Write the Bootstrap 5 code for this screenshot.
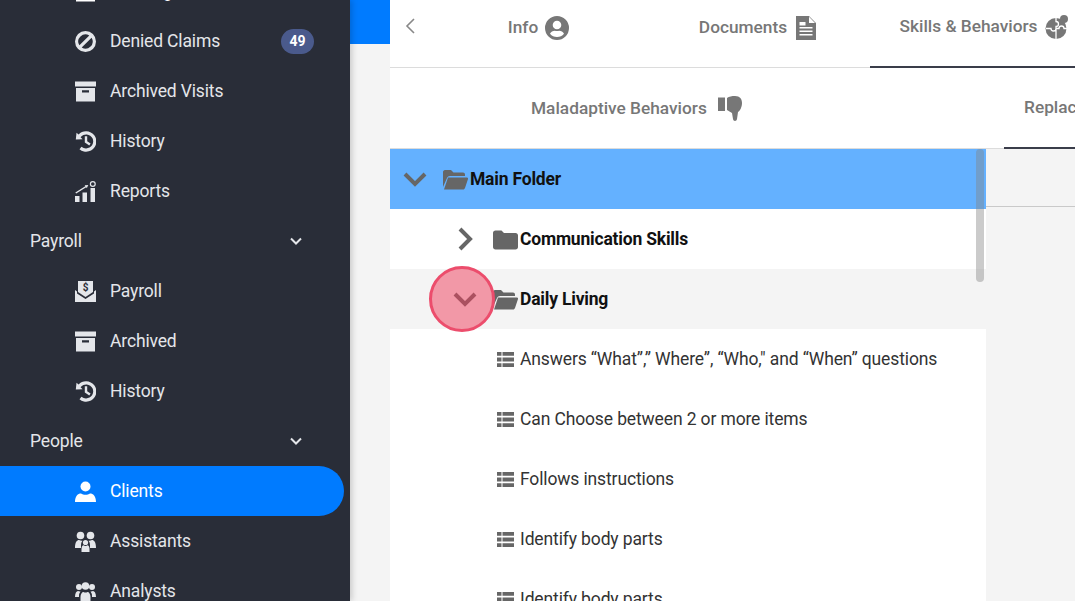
<!DOCTYPE html>
<html lang="en">
<head>
    <meta charset="UTF-8">
    <title>Clients</title>
    <meta name="viewport" content="width=device-width, initial-scale=1">
    <link href="https://cdn.jsdelivr.net/npm/bootstrap@5.3.2/dist/css/bootstrap.min.css" rel="stylesheet">
    <style>
        html, body { height: 100%; overflow: hidden; }
        body { background: #f4f4f4; font-family: Roboto, "Liberation Sans", sans-serif; font-size: 18px; }
        .app-shell { height: 601px; overflow: hidden; }

        .side-menu { width: 350px; background: #292d38; box-shadow: 2px 0 6px rgba(0,0,0,.18); z-index: 2; }
        .side-list { margin-top: -34px; }
        .side-link { height: 50px; color: #e4e6ea; font-size: 17.5px; letter-spacing: -.15px; padding: 0 36px 0 75px; }
        .side-link:hover { color: #fff; }
        .side-link svg { width: 21px; height: 21px; margin-right: 14px; fill: currentColor; flex: none; }
        .side-head { padding: 0 47px 0 30px; }
        .side-head svg { width: 14px; height: 14px; margin-right: 0; }
        .side-active { background: #007bff; color: #fff; width: 344px; border-radius: 0 25px 25px 0; }
        .side-badge { background: #4a5a8c; font-size: 14px; font-weight: 700; width: 33px; height: 25px; padding: 0; line-height: 25px; margin-right: 0; }

        .gutter { width: 40px; }
        .gutter-top { height: 44px; background: #007bff; }

        .work-panel { width: 685px; background: #fff; }
        .tab-row { height: 68px; border-bottom: 1px solid #dcdcdc; }
        .back-btn { width: 40px; flex: none; color: #888; }
        .back-btn svg { width: 12px; height: 18px; }
        .top-tab { width: 220px; flex: none; height: 68px; color: #777; font-weight: 500; font-size: 17.3px; padding: 0 3px 13px 0; }
        .top-tab svg { fill: #777; width: 24px; height: 24px; margin-left: 7px; }
        .top-tab-on { width: 228px; padding-right: 0; border-bottom: 2px solid #3a3d4a; }
        .sub-row { height: 81px; border-bottom: 1px solid #dcdcdc; }
        .sub-tab { height: 81px; color: #777; font-weight: 500; font-size: 17.3px; }
        .sub-tab svg { fill: #777; width: 24px; height: 25px; margin-left: 11px; }
        .sub-first { width: 614px; flex: none; padding-left: 141px; }
        .sub-on { flex: 1 0 auto; border-bottom: 2px solid #3a3d4a; padding-left: 20px; white-space: nowrap; }

        .tree-area { height: 452px; }
        .tree-pane { width: 596px; background: #fff; flex: none; }
        .tree-row { height: 60px; color: #111; }
        .tree-row svg { fill: #666; flex: none; }
        .tree-main { background: #64b1ff; padding-left: 12px; }
        .tree-sub { padding-left: 62px; }
        .tree-hot { background: #f4f4f4; }
        .tree-leaf { padding-left: 107px; color: #333; font-size: 17.5px; letter-spacing: -.13px; }
        .tree-leaf svg { width: 17px; height: 15px; margin-right: 6px; }
        .tree-name { font-weight: 700; font-size: 17.5px; letter-spacing: -.2px; }
        .chev { width: 26px; height: 26px; margin-right: 15px; }
        .folder { width: 25px; height: 21px; margin-right: 2px; }
        .tree-bar { position: absolute; left: 586px; top: 0; width: 8px; height: 133px; border-radius: 4px; background: rgba(130,130,130,.42); }
        .side-pane { background: #f4f4f4; }
        .side-pane-top { height: 58px; border-bottom: 1px solid #c9c9c9; }

        .click-mark { position: absolute; left: 429px; top: 266px; width: 66px; height: 66px; border-radius: 50%; background: rgba(240,60,90,.5); border: 3px solid #ec4d6c; z-index: 3; }
    </style>
</head>
<body>
    <svg width="0" height="0" class="d-block position-absolute">
        <defs>
            <symbol id="i-ban" viewBox="0 0 21 21"><path fill-rule="evenodd" d="M10.500 0a10.500 10.500 0 1 0 0 21 10.500 10.500 0 0 0 0-21zM4.400 14.300A7.200 7.200 0 0 1 14.300 4.400zM6.700 16.600 16.600 6.700a7.200 7.200 0 0 1-9.900 9.900z"/></symbol>
            <symbol id="i-box" viewBox="0 0 21 21"><path fill-rule="evenodd" d="M0 .5h21v5H0zM1 7h19v13.500H1zM7 9.300v2.200h7V9.300z"/></symbol>
            <symbol id="i-hist" viewBox="0 0 21 21"><path d="M11 .3A10 10 0 0 0 3.600 3.600L1.500 1.800.8 8.600l6.800-.4-2-2A7 7 0 1 1 11 17.400a7 7 0 0 1-4.500-1.600l-2 2.400A10.200 10.200 0 1 0 11 .3z"/><path d="M9.800 5.200h2.400v5l3.400 2.300-1.300 1.900-4.500-3z"/></symbol>
            <symbol id="i-rep" viewBox="0 0 21 21"><path d="M0 15h4.500v6H0zM7.500 11.500H12V21H7.500zM15.500 7H20v14h-4.500z"/><path d="M.3 11.600l10-6.300-.6-1 3.600-.4-1.500 3.300-.6-1-10 6.200z"/><path fill-rule="evenodd" d="M17.800 0a3 3 0 1 0 0 6 3 3 0 0 0 0-6zm0 1.200a1.800 1.800 0 1 1 0 3.600 1.800 1.800 0 0 1 0-3.600z"/></symbol>
            <symbol id="i-pay" viewBox="0 0 21 21"><path d="M3 0h15v11l-7.500 5L3 11z"/><path d="M0 9l2 1.400v2L10.500 18l8.500-5.600v-2L21 9v12H0z"/><text x="10.500" y="10" text-anchor="middle" font-size="10" font-weight="700" font-family="Roboto, sans-serif" fill="#292d38">$</text></symbol>
            <symbol id="i-user" viewBox="0 0 21 21"><circle cx="10.500" cy="5.500" r="5"/><path d="M0 21c0-6 3-8.500 6-8.500 1.200.8 2.800 1.300 4.500 1.300s3.300-.5 4.500-1.300c3 0 6 2.500 6 8.500z"/></symbol>
            <symbol id="i-asst" viewBox="0 0 21 21"><circle cx="5.500" cy="4.500" r="3.800"/><circle cx="15.500" cy="4.500" r="3.800"/><path d="M0 17c0-6 2-8 4-8 1 .6 2.300.8 3.500.7A6 6 0 0 0 6 14v3zM21 17c0-6-2-8-4-8-1 .6-2.300.8-3.500.7A6 6 0 0 1 15 14v3z"/><circle cx="10.500" cy="11.500" r="2.600"/><path d="M6.500 21v-3c0-2.300 1-3.700 2-3.700 1.200.8 2.800.8 4 0 1 0 2 1.400 2 3.700v3z"/></symbol>
            <symbol id="i-anal" viewBox="0 0 21 21"><circle cx="4" cy="6" r="3"/><circle cx="17" cy="6" r="3"/><circle cx="10.500" cy="5" r="3.800"/><path d="M0 16c0-4 1.500-6 3-6 .8.400 1.700.6 2.500.4A7 7 0 0 0 4 15v1zM21 16c0-4-1.500-6-3-6-.8.400-1.700.6-2.500.4A7 7 0 0 1 17 15v1z"/><path d="M5.500 20v-4c0-3 1.500-5 3-5 1.300.8 2.700.8 4 0 1.500 0 3 2 3 5v4z"/></symbol>
            <symbol id="i-down" viewBox="0 0 14 14"><path d="M2 4.500l5 5 5-5" fill="none" stroke="currentColor" stroke-width="2"/></symbol>
            <symbol id="i-prof" viewBox="0 0 24 24"><path fill-rule="evenodd" d="M12 0a12 12 0 1 0 0 24 12 12 0 0 0 0-24zm0 4.700a4.300 4.300 0 1 1 0 8.600 4.300 4.300 0 0 1 0-8.600zM12 21a9 9 0 0 1-7-3.300c.9-1.800 2.800-3 4.900-3 .6.200 1.300.4 2.100.4s1.500-.2 2.100-.4c2.100 0 4 1.200 4.900 3A9 9 0 0 1 12 21z"/></symbol>
            <symbol id="i-doc" viewBox="0 0 24 24"><path fill-rule="evenodd" d="M2 0h13l7 7v17H2zM15 .8V7h6zM5.500 6v3.500h6V6zM5.500 11v1.500h13V11zM5.500 14.500V16h13v-1.500zM5.500 18v1.500h13V18z"/></symbol>
            <symbol id="i-puz" viewBox="0 0 24 24"><circle cx="11" cy="13.500" r="10.500"/><circle cx="19" cy="4" r="4"/><path d="M11 3v3.500a2.500 2.500 0 0 1 0 5V24M1 13.500h5a2.500 2.500 0 0 0 5 0h3a2.500 2.500 0 0 1 5 0h3" fill="none" stroke="#fff" stroke-width="1.300"/></symbol>
            <symbol id="i-thumb" viewBox="0 0 24 25"><path d="M0 1.500h7V15H0z"/><path d="M9 2C11 .5 14 0 17 0c5 0 7 3 7 7 0 4-2 8-4 9l-1 7c-.3 2.500-3.700 2.500-4 0l-1-6-5-3z"/></symbol>
            <symbol id="i-open" viewBox="0 0 25 21"><path d="M0 18V3c0-1 .8-2 2-2h6l2.500 2.500H20c1 0 2 .8 2 2V7H7c-1.500 0-2.500.8-3 2z"/><path d="M5 8.500h19c.8 0 1.200.7 1 1.400L22 19c-.3.900-1 1.500-2 1.500H1z"/></symbol>
            <symbol id="i-shut" viewBox="0 0 25 21"><path d="M0 4c0-1.500 1-2.500 2.500-2.500h6L11 4h11.500C24 4 25 5 25 6.500V18c0 1.500-1 2.500-2.500 2.500h-20C1 20.500 0 19.500 0 18z"/></symbol>
            <symbol id="i-list" viewBox="0 0 17 15"><path d="M0 0h4.500v3.800H0zM5.500 0H17v3.800H5.500zM0 5.600h4.500v3.800H0zM5.500 5.600H17v3.800H5.500zM0 11.200h4.500V15H0zM5.500 11.200H17V15H5.500z"/></symbol>
            <symbol id="i-cdown" viewBox="0 0 26 26"><path d="M3 8l10 10L23 8" fill="none" stroke="#666" stroke-width="4"/></symbol>
            <symbol id="i-cright" viewBox="0 0 26 26"><path d="M8 3l10 10L8 23" fill="none" stroke="#666" stroke-width="4"/></symbol>
        </defs>
    </svg>

    <div class="app-shell d-flex position-relative">
        <aside class="side-menu flex-shrink-0">
            <nav class="nav flex-column flex-nowrap side-list">
                <a class="nav-link side-link d-flex align-items-center" href="#"><svg><use href="#i-box"/></svg><span>Pending Claims</span></a>
                <a class="nav-link side-link d-flex align-items-center" href="#"><svg><use href="#i-ban"/></svg><span>Denied Claims</span><span class="badge rounded-pill side-badge ms-auto">49</span></a>
                <a class="nav-link side-link d-flex align-items-center" href="#"><svg><use href="#i-box"/></svg><span>Archived Visits</span></a>
                <a class="nav-link side-link d-flex align-items-center" href="#"><svg><use href="#i-hist"/></svg><span>History</span></a>
                <a class="nav-link side-link d-flex align-items-center" href="#"><svg><use href="#i-rep"/></svg><span>Reports</span></a>
                <a class="nav-link side-link side-head d-flex align-items-center justify-content-between" href="#"><span>Payroll</span><svg><use href="#i-down"/></svg></a>
                <a class="nav-link side-link d-flex align-items-center" href="#"><svg><use href="#i-pay"/></svg><span>Payroll</span></a>
                <a class="nav-link side-link d-flex align-items-center" href="#"><svg><use href="#i-box"/></svg><span>Archived</span></a>
                <a class="nav-link side-link d-flex align-items-center" href="#"><svg><use href="#i-hist"/></svg><span>History</span></a>
                <a class="nav-link side-link side-head d-flex align-items-center justify-content-between" href="#"><span>People</span><svg><use href="#i-down"/></svg></a>
                <a class="nav-link side-link side-active d-flex align-items-center" href="#"><svg><use href="#i-user"/></svg><span>Clients</span></a>
                <a class="nav-link side-link d-flex align-items-center" href="#"><svg><use href="#i-asst"/></svg><span>Assistants</span></a>
                <a class="nav-link side-link d-flex align-items-center" href="#"><svg><use href="#i-anal"/></svg><span>Analysts</span></a>
            </nav>
        </aside>

        <div class="gutter flex-shrink-0"><div class="gutter-top"></div></div>

        <main class="work-panel flex-shrink-0 overflow-hidden">
            <div class="tab-row d-flex">
                <div class="back-btn d-flex align-items-center justify-content-center pb-3"><svg viewBox="0 0 12 18"><path d="M10 2 3 9l7 7" fill="none" stroke="currentColor" stroke-width="1.600"/></svg></div>
                <div class="top-tab d-flex align-items-center justify-content-center">Info<svg><use href="#i-prof"/></svg></div>
                <div class="top-tab d-flex align-items-center justify-content-center">Documents<svg><use href="#i-doc"/></svg></div>
                <div class="top-tab top-tab-on d-flex align-items-center justify-content-center">Skills &amp; Behaviors<svg><use href="#i-puz"/></svg></div>
            </div>
            <div class="sub-row d-flex">
                <div class="sub-tab sub-first d-flex align-items-center">Maladaptive Behaviors<svg><use href="#i-thumb"/></svg></div>
                <div class="sub-tab sub-on d-flex align-items-center">Replacement Programs</div>
            </div>
            <div class="tree-area d-flex">
                <div class="tree-pane position-relative">
                    <ul class="list-unstyled mb-0">
                        <li class="tree-row tree-main d-flex align-items-center"><svg class="chev"><use href="#i-cdown"/></svg><svg class="folder"><use href="#i-open"/></svg><span class="tree-name">Main Folder</span></li>
                        <li class="tree-row tree-sub d-flex align-items-center"><svg class="chev"><use href="#i-cright"/></svg><svg class="folder"><use href="#i-shut"/></svg><span class="tree-name">Communication Skills</span></li>
                        <li class="tree-row tree-sub tree-hot d-flex align-items-center"><svg class="chev"><use href="#i-cdown"/></svg><svg class="folder"><use href="#i-open"/></svg><span class="tree-name">Daily Living</span></li>
                        <li class="tree-row tree-leaf d-flex align-items-center"><svg><use href="#i-list"/></svg><span>Answers “What”,” Where”, “Who," and “When” questions</span></li>
                        <li class="tree-row tree-leaf d-flex align-items-center"><svg><use href="#i-list"/></svg><span>Can Choose between 2 or more items</span></li>
                        <li class="tree-row tree-leaf d-flex align-items-center"><svg><use href="#i-list"/></svg><span>Follows instructions</span></li>
                        <li class="tree-row tree-leaf d-flex align-items-center"><svg><use href="#i-list"/></svg><span>Identify body parts</span></li>
                        <li class="tree-row tree-leaf d-flex align-items-center"><svg><use href="#i-list"/></svg><span>Identify body parts</span></li>
                    </ul>
                    <div class="tree-bar"></div>
                </div>
                <div class="side-pane flex-grow-1"><div class="side-pane-top"></div></div>
            </div>
        </main>
        <div class="click-mark"></div>
    </div>
    <script src="https://cdn.jsdelivr.net/npm/bootstrap@5.3.2/dist/js/bootstrap.bundle.min.js"></script>
</body>
</html>
